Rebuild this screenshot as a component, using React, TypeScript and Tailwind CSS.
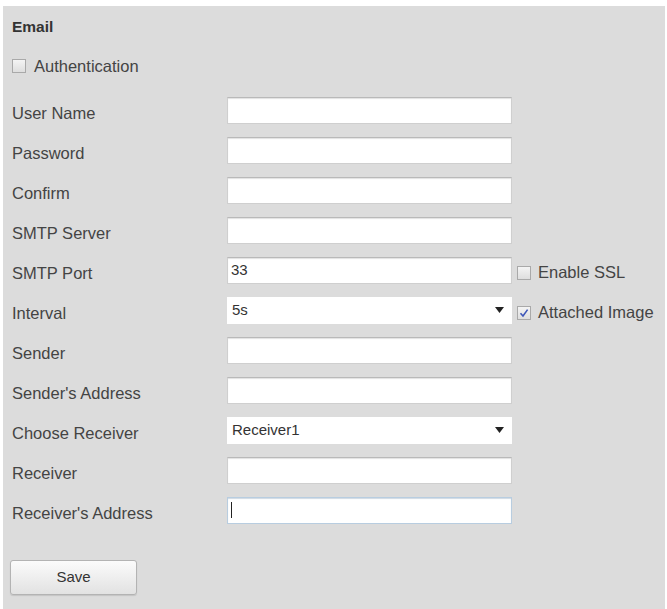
import type { ReactNode } from "react";

const labelFont = "font-['Liberation_Sans',Arial,sans-serif]";

function Checkbox({ checked = false }: { checked?: boolean }) {
  return (
    <span className="flex h-[14px] w-[14px] shrink-0 items-center justify-center border border-[#a9a9a9] bg-gradient-to-b from-[#f4f4f4] to-[#dedede]">
      {checked && (
        <svg width="10" height="10" viewBox="0 0 10 10">
          <path d="M1.5 5.2 L4 8 L8.6 1.6" fill="none" stroke="#3d56b8" strokeWidth="1.6" />
        </svg>
      )}
    </span>
  );
}

function TextBox({ value, focused }: { value?: string; focused?: boolean }) {
  return (
    <div
      className={`flex h-[27px] w-[285px] items-center border bg-white px-[3px] text-[15px] text-[#333] ${
        focused ? "border-[#b8cde0] shadow-[inset_0_1px_1px_#cfd9e3]" : "border-[#cfcfcf] border-t-[#b9b9b9] shadow-[inset_0_1px_1px_#e2e2e2]"
      }`}
    >
      {focused && <span className="h-[16px] w-px bg-[#222]" />}
      {value}
    </div>
  );
}

function SelectBox({ value }: { value: string }) {
  return (
    <div className="flex h-[27px] w-[285px] items-center justify-between bg-white pl-[5px] pr-[8px] text-[15px] text-[#333]">
      <span>{value}</span>
      <svg width="9" height="6" viewBox="0 0 9 6">
        <path d="M0 0 H9 L4.5 6 Z" fill="#222" />
      </svg>
    </div>
  );
}

function Row({ label, children, extra }: { label: string; children: ReactNode; extra?: ReactNode }) {
  return (
    <div className="flex h-10 items-center">
      <span className="w-[215px] shrink-0 pt-[6px] text-[16.5px] text-[#444]">{label}</span>
      {children}
      {extra && (
        <div className="ml-[5px] flex items-center gap-[7px] pt-[5px] text-[16.5px] text-[#444]">{extra}</div>
      )}
    </div>
  );
}

export default function App() {
  return (
    <div className={`h-[609px] w-[667px] bg-white pl-[3px] pr-[2px] pt-[6px] ${labelFont}`}>
      <div className="h-full bg-[#dcdcdc] pl-[9px]">
        <div className="pt-[10px] text-[15.5px] font-bold leading-[22px] text-[#333]">Email</div>
        <div className="mt-[17px] flex h-[22px] items-center gap-[8px] text-[16.5px] text-[#444]">
          <Checkbox />
          <span>Authentication</span>
        </div>

        <div className="mt-[13px]">
          <Row label="User Name"><TextBox /></Row>
          <Row label="Password"><TextBox /></Row>
          <Row label="Confirm"><TextBox /></Row>
          <Row label="SMTP Server"><TextBox /></Row>
          <Row
            label="SMTP Port"
            extra={<><Checkbox /><span>Enable SSL</span></>}
          >
            <TextBox value="33" />
          </Row>
          <Row
            label="Interval"
            extra={<><Checkbox checked /><span>Attached Image</span></>}
          >
            <SelectBox value="5s" />
          </Row>
          <Row label="Sender"><TextBox /></Row>
          <Row label="Sender's Address"><TextBox /></Row>
          <Row label="Choose Receiver"><SelectBox value="Receiver1" /></Row>
          <Row label="Receiver"><TextBox /></Row>
          <Row label="Receiver's Address"><TextBox focused /></Row>
        </div>

        <button className="ml-[-2px] mt-[30px] h-[35px] w-[127px] rounded-[3px] border border-[#b3b3b3] bg-gradient-to-b from-[#fbfbfb] to-[#e2e2e2] text-[15px] text-[#333] shadow-[0_1px_1px_#c4c4c4]">
          Save
        </button>
      </div>
    </div>
  );
}
